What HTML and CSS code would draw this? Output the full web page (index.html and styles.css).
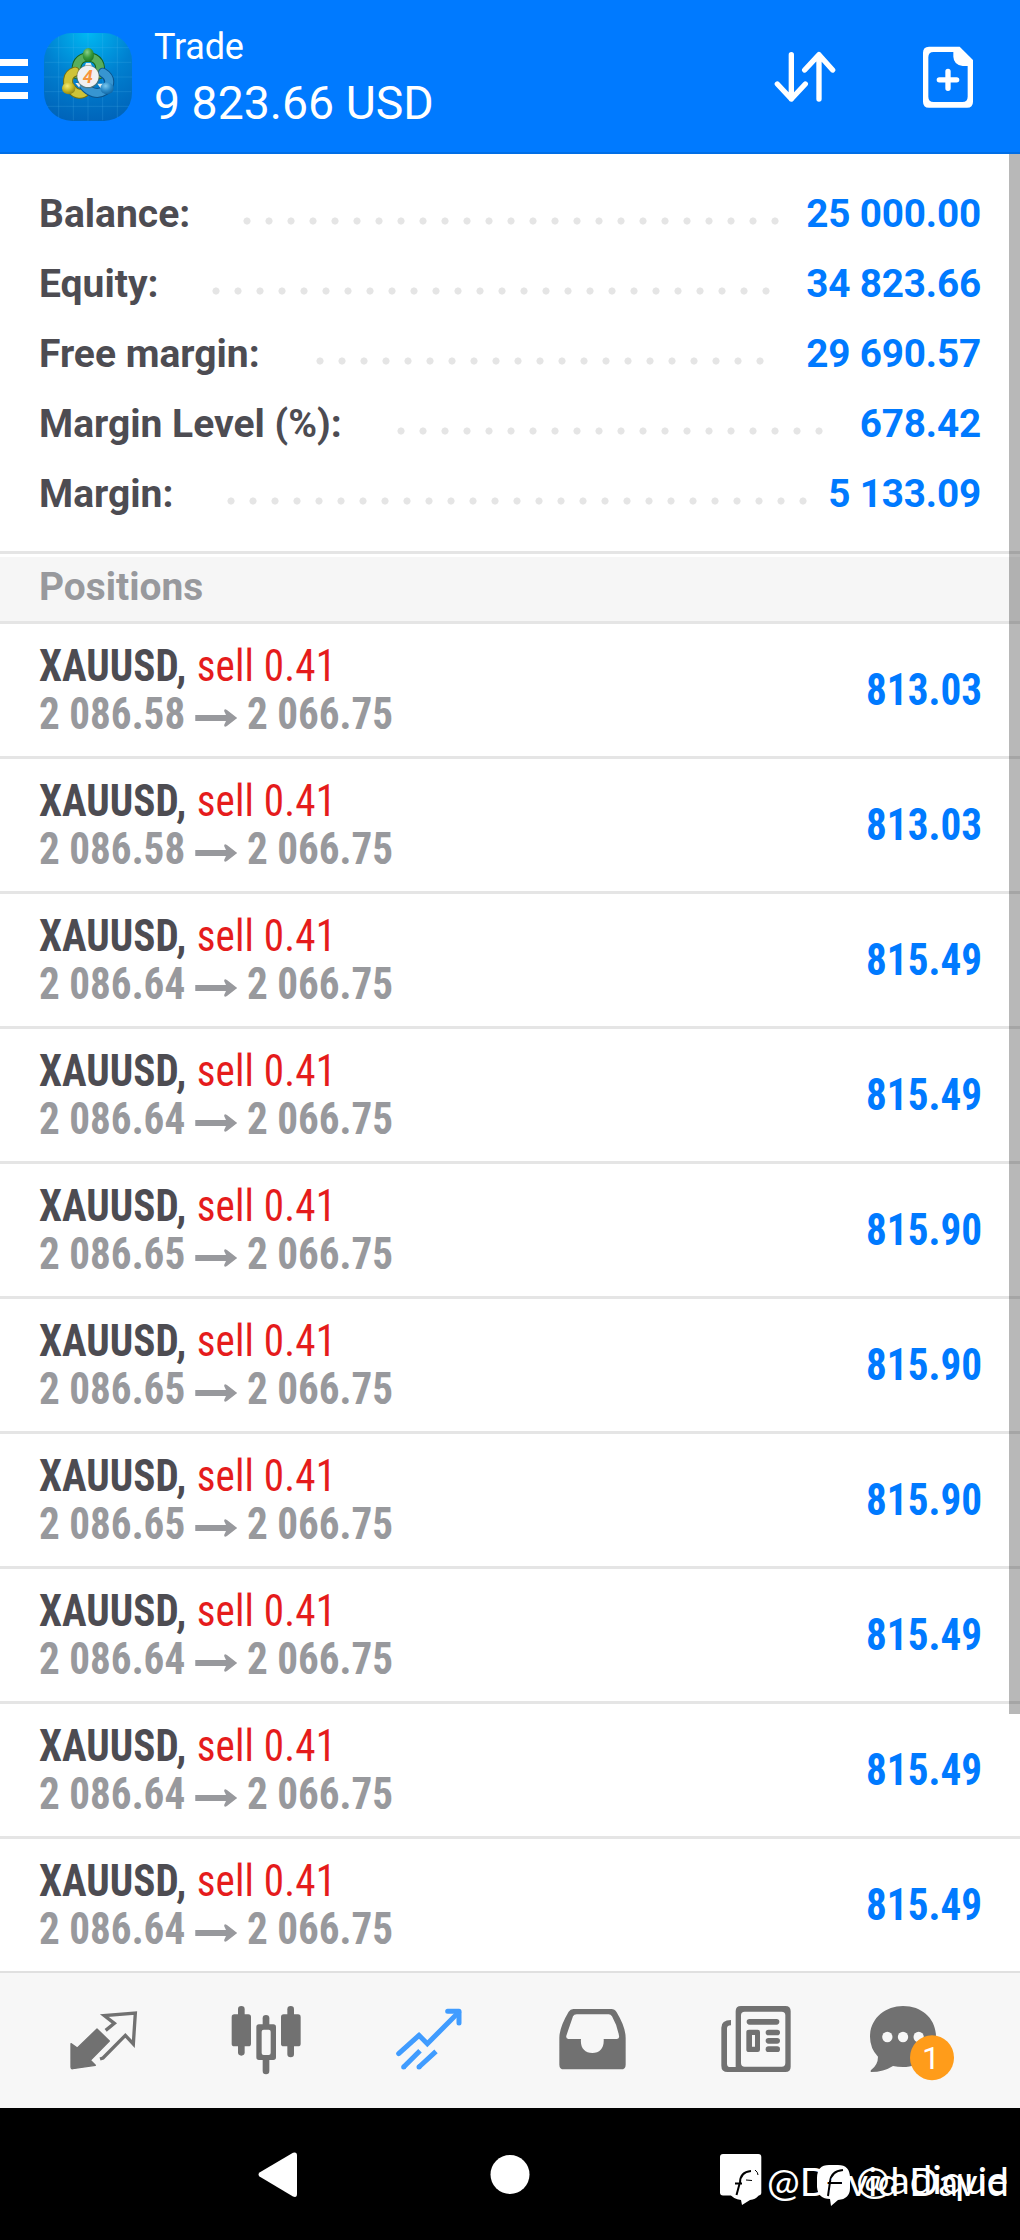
FILE: index.html
```html
<!DOCTYPE html>
<html lang="en">
<head>
<meta charset="utf-8">
<title>Trade</title>
<link rel="stylesheet" href="styles.css">
</head>
<body>
<header class="header">
  <div class="burger"><i></i><i></i><i></i></div>
  <svg class="logo" viewBox="0 0 264 264">
    <defs>
      <radialGradient id="sky" cx=".5" cy="0" r="1.05"><stop offset="0" stop-color="#00b8f2"/><stop offset=".5" stop-color="#0080d0"/><stop offset="1" stop-color="#0062b8"/></radialGradient>
      <radialGradient id="gr" cx=".4" cy=".3" r=".8"><stop offset="0" stop-color="#8ad08a"/><stop offset=".5" stop-color="#379a3c"/><stop offset="1" stop-color="#166b20"/></radialGradient>
      <radialGradient id="ye" cx=".4" cy=".3" r=".8"><stop offset="0" stop-color="#f4ec76"/><stop offset=".5" stop-color="#c5b726"/><stop offset="1" stop-color="#817510"/></radialGradient>
      <radialGradient id="bl" cx=".4" cy=".3" r=".8"><stop offset="0" stop-color="#7cc8ee"/><stop offset=".5" stop-color="#2b8bc9"/><stop offset="1" stop-color="#0b5b98"/></radialGradient>
    </defs>
    <rect width="264" height="264" rx="84" fill="url(#sky)"/>
    <path d="M44 10V254M88 2V262M132 0V264M176 2V262M220 10V254M10 44H254M2 88H262M0 132H264M2 176H262M10 220H254" stroke="#5cc4f5" stroke-opacity=".18" stroke-width="3"/>
    <g fill="none" stroke-linecap="round">
      <path d="M99 124C92 92 106 73 133 72C162 73 174 96 166 124" stroke="#15601d" stroke-width="29"/>
      <path d="M99 124C92 92 106 73 133 72C162 73 174 96 166 124" stroke="#58ae5d" stroke-width="23"/>
      <path d="M93 116C68 124 66 154 84 170C98 186 114 186 126 174" stroke="#77700f" stroke-width="30"/>
      <path d="M93 116C68 124 66 154 84 170C98 186 114 186 126 174" stroke="#cfc338" stroke-width="24"/>
      <path d="M177 119C202 134 200 156 183 172C160 188 136 177 120 158" stroke="#0b548d" stroke-width="30"/>
      <path d="M177 119C202 134 200 156 183 172C160 188 136 177 120 158" stroke="#3795d1" stroke-width="24"/>
    </g>
    <path d="M94 150l16 0-4 14zM160 152l18 0-8 14zM126 90h14l4 10h-22z" fill="#e8eef0"/>
    <ellipse cx="133" cy="66" rx="17" ry="21" fill="url(#gr)"/>
    <ellipse cx="74" cy="166" rx="20" ry="18" fill="url(#ye)"/>
    <ellipse cx="189" cy="166" rx="20" ry="18" fill="url(#bl)"/>
    <circle cx="132" cy="131" r="35" fill="#6b6a50" opacity=".6"/>
    <circle cx="132" cy="130" r="32" fill="#f0f0f2"/>
    <text class="logo-digit" x="131" y="150" text-anchor="middle">4</text>
  </svg>
  <div class="heading">
    <div class="title">Trade</div>
    <div class="profit">9 823.66 USD</div>
  </div>
  <svg class="action" viewBox="0 0 480 456"><path d="M274 164V297M232 252L274 297 316 252M357 297V164M314 210L357 164 398 210" fill="none" stroke="#fff" stroke-width="16" stroke-linecap="round" stroke-linejoin="round"/></svg>
  <svg class="action" viewBox="480 0 480 456"><path fill="#fff" fill-rule="evenodd" d="M687 140H779L819 180V305Q819 323 801 323H687Q669 323 669 305V158Q669 140 687 140ZM701 156Q685 156 685 172V290Q685 306 701 306H787Q803 306 803 290V198H788Q761 194 760 170V156Z"/><path d="M744 214V265M718 239.500H770" stroke="#fff" stroke-width="16" stroke-linecap="round"/></svg>
</header>

<main class="content">
  <section class="summary">
    <div class="stat"><span class="label">Balance:</span><span class="dots dots-balance"></span><span class="amount">25 000.00</span></div>
    <div class="stat"><span class="label">Equity:</span><span class="dots dots-equity"></span><span class="amount">34 823.66</span></div>
    <div class="stat"><span class="label">Free margin:</span><span class="dots dots-free"></span><span class="amount">29 690.57</span></div>
    <div class="stat"><span class="label">Margin Level (%):</span><span class="dots dots-level"></span><span class="amount">678.42</span></div>
    <div class="stat"><span class="label">Margin:</span><span class="dots dots-margin"></span><span class="amount">5 133.09</span></div>
  </section>
  <h2 class="section">Positions</h2>
  <ul class="positions" id="positions"></ul>
  <div class="scrollbar"></div>
</main>

<nav class="tabs">
  <svg viewBox="66 102 489 402"><path class="ink" stroke="#717171" stroke-width="4" stroke-linejoin="round" d="M213 311L232 324 291 267 328 303 271 361 286 376 218 386Q213 387 213 380Z"/><path d="M317 271L343 250 313 227 406 219 400 312 376 286 309 354 300 357" fill="none" stroke="#717171" stroke-width="10"/></svg>
  <svg viewBox="555 102 489 402"><g class="ink"><rect x="714" y="198" width="20" height="149" rx="10"/><rect x="695" y="223" width="58" height="96" rx="8"/><rect x="788" y="225" width="20" height="40" rx="10"/><rect x="788" y="345" width="20" height="58" rx="10"/><path fill-rule="evenodd" d="M777 253H820Q828 253 828 261V352Q828 360 820 360H777Q769 360 769 352V261Q769 253 777 253ZM791 269Q785 269 785 275V339Q785 345 791 345H806Q812 345 812 339V275Q812 269 806 269Z"/><rect x="862" y="198" width="20" height="154" rx="10"/><rect x="843" y="223" width="59" height="96" rx="8"/></g></svg>
  <svg viewBox="1044 102 489 402"><g fill="none" stroke="#409cff" stroke-width="15"><path d="M1196 341L1257 286 1282 311 1376 217" stroke-linecap="round"/><path d="M1343 214H1377V249" stroke-linecap="round" stroke-linejoin="round"/><path d="M1211 381L1260 332M1257 381L1308 334"/></g><circle cx="1211" cy="381" r="7.500" fill="#409cff"/><circle cx="1257" cy="381" r="7.500" fill="#409cff"/></svg>
  <svg viewBox="3 102 489 402"><path class="ink" fill-rule="evenodd" d="M190 207H304Q314 207 320 217Q347 262 347 294V374Q347 388 333 388H162Q148 388 148 374V294Q148 262 176 215Q181 207 190 207ZM200 223Q192 223 189 229L169 287Q167 297 175 297H213C210 323 224 339 247 339S283 323 281 297H321Q329 297 327 287Q321 255 306 229Q302 223 296 223Z"/></svg>
  <svg viewBox="492 102 489 402"><path class="ink" fill-rule="evenodd" d="M693 198H826Q842 198 842 214V380Q842 396 826 396H653Q634 396 634 377V263Q634 240 663 240V256Q651 256 651 265V371Q651 381 661 381H677V214Q677 198 693 198ZM704 215Q693 215 693 226V369Q693 380 704 380H815Q826 380 826 369V226Q826 215 815 215Z"/><g class="ink"><rect x="710" y="237" width="98" height="17" rx="8.500"/><path fill-rule="evenodd" d="M717 269H743Q750 269 750 276V329Q750 336 743 336H717Q709 336 709 329V276Q709 269 717 269ZM726 285V320H735V285Z"/><rect x="767" y="269" width="43" height="17" rx="8.500"/><rect x="767" y="294" width="43" height="17" rx="8.500"/><rect x="767" y="319" width="43" height="17" rx="8.500"/></g></svg>
  <svg viewBox="981 102 489 402"><path class="ink" d="M1179 198C1238 198 1278 238 1278 290C1278 345 1232 381 1179 381Q1163 381 1149 378Q1121 396 1083 396Q1080 393 1084 389Q1104 374 1104 350Q1080 325 1080 290C1080 236 1125 198 1179 198Z"/><g fill="#f7f7f7"><circle cx="1132" cy="291" r="15.500"/><circle cx="1179" cy="291" r="15.500"/><circle cx="1226" cy="291" r="15.500"/></g><ellipse cx="1266" cy="353" rx="66" ry="67.500" fill="#ff9c1a"/><text class="badge" x="1263" y="388" text-anchor="middle">1</text></svg>
</nav>

<footer class="system">
  <svg viewBox="0 0 1020 132">
    <g fill="#fff"><path d="M259.500 64.500L293 44.700Q297 43.500 297 47.500V86Q297 90 293 88.500L259.500 68.500Q257.500 66.500 259.500 64.500Z"/><circle cx="510" cy="66.500" r="19.500"/><rect x="720" y="46" width="41.300" height="41.500" rx="3"/></g>
    <path d="M749 57Q761 57 761 70V78Q761 91 750 92L742 97 741 92Q733 91 730 86Q731 78 736 74V69Q738 57 749 57Z" fill="#fff"/>
    <path d="M736.500 87L739.500 76M735 75.500H742M740 75Q740 64 751 63" fill="none" stroke="#000" stroke-width="2"/>
    <path d="M746 72L752 72.500M755 62Q758 64 758 67" fill="none" stroke="#000" stroke-width="1"/>
    <path d="M829 57H838Q850 57 850 70V80Q850 91 838 92L831 98 830 91Q818 91 817 79V70Q817 57 829 57Z" fill="#fff"/>
    <path d="M828 88L830 74Q831 63 843 62M826 75H842" fill="none" stroke="#000" stroke-width="2"/>
    <g class="watermark">
      <text x="767" y="88" textLength="242" lengthAdjust="spacingAndGlyphs">@David David</text>
      <text x="856" y="86" textLength="152" lengthAdjust="spacingAndGlyphs">@adique</text>
    </g>
  </svg>
</footer>
<script src="positions.js"></script>
</body>
</html>
```
FILE: positions.js
```js
const positions = [
  ['2 086.58', '813.03'], ['2 086.58', '813.03'], ['2 086.64', '815.49'],
  ['2 086.64', '815.49'], ['2 086.65', '815.90'], ['2 086.65', '815.90'],
  ['2 086.65', '815.90'], ['2 086.64', '815.49'], ['2 086.64', '815.49'],
  ['2 086.64', '815.49']
];
document.getElementById('positions').innerHTML = positions.map(([open, profit]) => `
  <li class="position">
    <div class="deal">
      <div class="order"><b>XAUUSD,</b> <span class="sell">sell 0.41</span></div>
      <div class="prices"><span>${open}</span><svg class="arrow" viewBox="0 0 45 18"><path d="M0 6H33L31 2Q31-1 34 1L45 9 34 17Q31 19 31 16L33 12H0Z"/></svg><span>2 066.75</span></div>
    </div>
    <div class="gain">${profit}</div>
  </li>`).join('');
```
FILE: styles.css
```css
* { box-sizing: border-box; }
body {
  margin: 0;
  width: 1020px;
  background: #fff;
  color: #4d4c52;
  font-family: Roboto, "Liberation Sans", sans-serif;
}
svg { display: block; }

.header {
  display: flex;
  height: 154px;
  background: #007aff;
  border-bottom: 2px solid #006ee6;
  color: #fff;
}
.burger {
  display: flex;
  flex-direction: column;
  gap: 9.5px;
  width: 28px;
  margin: 59px 16px 0 0;
}
.burger i { height: 7px; background: #fff; }
.logo { width: 88px; height: 88px; margin-top: 33px; }
.logo-digit { font: italic 700 54px Roboto, sans-serif; fill: #f7943c; }
.heading { flex: 1; margin-left: 22px; padding-top: 25px; white-space: nowrap; }
.title { font-size: 36px; line-height: 44px; letter-spacing: -.2px; }
.profit { font-size: 46.4px; line-height: 56px; padding-top: 6px; }
.action { width: 160px; height: 152px; }

.content { position: relative; height: 1817px; overflow: hidden; }
.summary { padding: 25px 39px 22px; height: 397px; }
.stat { display: flex; height: 70px; line-height: 70px; font-size: 39px; font-weight: 700; white-space: nowrap; }
.label { width: 0; }
.dots {
  height: 70px;
  background: radial-gradient(circle at 11px 42px, #e5e5e5 3.2px, transparent 3.9px) 0 0 / 22px 70px repeat-x;
}
.dots-balance { width: 550px; margin-left: 197.3px; }
.dots-equity { width: 572px; margin-left: 165.5px; }
.dots-free { width: 462px; margin-left: 269.5px; }
.dots-level { width: 440px; margin-left: 350.5px; }
.dots-margin { width: 594px; margin-left: 180.5px; }
.amount { margin-left: auto; color: #007aff; letter-spacing: -.15px; font-size: 38.7px; }

.section {
  margin: 0;
  height: 73px;
  border-top: 3px solid #e5e5e5;
  border-bottom: 3px solid #e5e5e5;
  background: linear-gradient(#fff 3px, #f6f6f6 3px);
  padding-left: 39px;
  font-size: 38.9px;
  font-weight: 700;
  line-height: 65px;
  color: #98999d;
}
.positions { margin: 0; padding: 0; list-style: none; }
.position {
  display: flex;
  justify-content: space-between;
  height: 135px;
  padding: 18px 39px 0;
  border-bottom: 3px solid #e5e5e5;
  font-family: "Roboto Condensed", Roboto, sans-serif;
  font-size: 44px;
  font-weight: 700;
  line-height: 48px;
  white-space: nowrap;
}
.deal { transform: scaleX(.935); transform-origin: left; }
.order b { font-weight: 700; }
.sell { margin-left: 1px; color: #e51c1c; font-weight: 400; letter-spacing: .15px; }
.prices { display: flex; color: #98999d; }
.arrow { width: 45px; height: 18px; margin: 19px 10px 0 11px; fill: #98999d; }
.gain { margin-right: -1px; padding-top: 24px; color: #007aff; transform: scaleX(.935); transform-origin: right; }
.scrollbar { position: absolute; top: 0; right: 0; width: 11px; height: 1560px; background: rgba(0, 0, 0, .28); }

.tabs {
  display: grid;
  grid-template-columns: repeat(6, 163px);
  height: 137px;
  padding: 1px 20px 0 22px;
  border-top: 2px solid #e0e0e0;
  background: #f7f7f7;
}
.tabs svg { width: 163px; height: 134px; }
.ink { fill: #717171; }
.badge { font: 400 96px Roboto, sans-serif; fill: #fff; }

.system { height: 132px; background: #000; }
.system svg { width: 1020px; height: 132px; }
.watermark { font: 400 39px Lato, sans-serif; fill: #fff; }
```
